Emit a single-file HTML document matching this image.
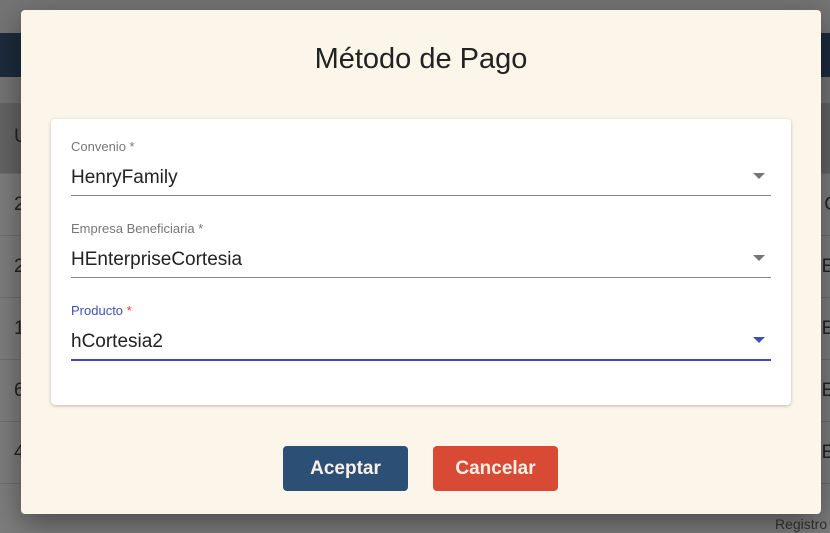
<!DOCTYPE html>
<html><head><meta charset="utf-8"><style>
*{margin:0;padding:0;box-sizing:border-box}
body{width:830px;height:533px;overflow:hidden;position:relative;background:#7d7d7d;font-family:"Liberation Sans",sans-serif}
.bg{position:absolute;left:0;width:830px}
.row{position:absolute;left:0;width:830px;border-top:1px solid #6e6e6e;color:#222;font-size:19px}
.dlg{position:absolute;left:21px;top:10px;width:800px;height:504px;background:#fcf5ea;border-radius:4px;box-shadow:0 10px 30px rgba(0,0,0,.4)}
h1{position:absolute;top:33px;width:100%;text-align:center;font-weight:normal;font-size:29px;color:#222}
.card{position:absolute;left:30px;top:109px;width:740px;height:286px;background:#fff;border-radius:4px;box-shadow:0 1px 3px rgba(0,0,0,.25)}
.f{position:absolute;left:20px;width:700px}
.lab{font-size:13px;color:#777}
.val{font-size:19px;color:#222;margin-top:13px;height:28px}
.line{height:1px;background:#888}
.arr{position:absolute;right:6px;width:0;height:0;border-left:6px solid transparent;border-right:6px solid transparent;border-top:6px solid #757575}
.btn{position:absolute;top:436px;width:125px;height:45px;border-radius:4px;color:#fcf0e6;font-weight:bold;font-size:19px;text-align:center;line-height:45px}
</style></head><body>
<div class="bg" style="top:0;height:33px;background:#747474"></div>
<div class="bg" style="top:33px;height:44px;background:#1c2b3c"></div>
<div class="bg" style="top:77px;height:26px;background:#747474"></div>
<div class="bg" style="top:103px;height:70px;background:#646464"></div>
<div class="row" style="top:173px;height:62px;line-height:62px;padding-left:14px">2<span style="position:absolute;right:-8px">C</span></div>
<div class="row" style="top:235px;height:62px;line-height:62px;padding-left:14px">2<span style="position:absolute;right:-18px">EN</span></div>
<div class="row" style="top:297px;height:62px;line-height:62px;padding-left:14px">1<span style="position:absolute;right:-18px">EN</span></div>
<div class="row" style="top:359px;height:62px;line-height:62px;padding-left:14px">6<span style="position:absolute;right:-18px">EN</span></div>
<div class="row" style="top:421px;height:62px;line-height:62px;padding-left:14px">4<span style="position:absolute;right:-18px">EN</span></div>
<div class="row" style="top:483px;height:50px"></div>
<div style="position:absolute;left:775px;top:516px;font-size:14px;color:#333">Registro</div>
<div style="position:absolute;left:14px;top:126px;font-size:19px;color:#222">U</div>
<div class="dlg">
<h1>Método de Pago</h1>
<div class="card">
 <div class="f" style="top:20px"><div class="lab">Convenio *</div><div class="val">HenryFamily</div><div class="line"></div><div class="arr" style="top:34px"></div></div>
 <div class="f" style="top:102px"><div class="lab">Empresa Beneficiaria *</div><div class="val">HEnterpriseCortesia</div><div class="line"></div><div class="arr" style="top:34px"></div></div>
 <div class="f" style="top:184px"><div class="lab" style="color:#3f51b5">Producto <span style="color:#e53935">*</span></div><div class="val">hCortesia2</div><div class="line" style="height:2px;background:#3f51b5"></div><div class="arr" style="top:34px;border-top-color:#3f51b5"></div></div>
</div>
<div class="btn" style="left:262px;background:#2c5075">Aceptar</div>
<div class="btn" style="left:412px;background:#d94a35">Cancelar</div>
</div>
</body></html>
